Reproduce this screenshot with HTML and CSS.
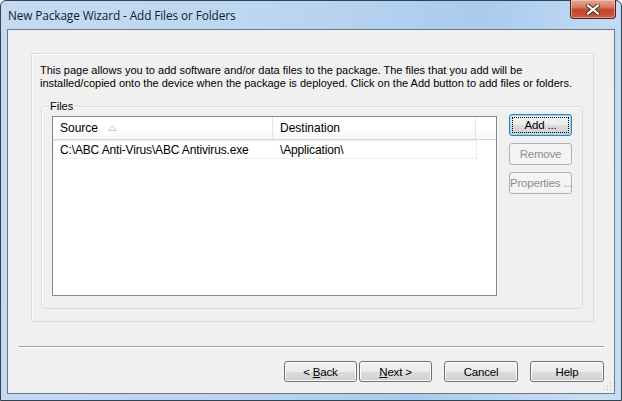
FILE: index.html
```html
<!DOCTYPE html>
<html>
<head>
<meta charset="utf-8">
<link rel="stylesheet" href="styles.css">
</head>
<body>
<div class="window">
  <div class="titlebar">
    <span class="title">New Package Wizard - Add Files or Folders</span>
    <div class="close-btn">
      <svg width="14" height="11" viewBox="0 0 14 11"><path d="M2 1.5 L12 9.5 M12 1.5 L2 9.5" stroke="#4a2a20" stroke-width="4" stroke-linecap="square"/><path d="M2 1.5 L12 9.5 M12 1.5 L2 9.5" stroke="#fff" stroke-width="2.2" stroke-linecap="square"/></svg>
    </div>
  </div>
  <div class="client">
    <div class="panel">
      <p class="intro">This page allows you to add software and/or data files to the package. The files that you add will be installed/copied onto the device when the package is deployed. Click on the Add button to add files or folders.</p>
      <fieldset class="files">
        <legend>Files</legend>
        <div class="files-body">
          <div class="listview">
            <div class="lv-header">
              <div class="col col-src">Source <svg class="sort" width="9" height="6" viewBox="0 0 9 6"><path d="M0.5 5.5 L4.5 0.5 L8.5 5.5 Z" fill="none" stroke="#c8ccd0"/></svg></div>
              <div class="col col-dst">Destination</div>
              <div class="col col-rest"></div>
            </div>
            <div class="lv-row">
              <div class="cell cell-src">C:\ABC Anti-Virus\ABC Antivirus.exe</div>
              <div class="cell cell-dst">\Application\</div>
            </div>
          </div>
          <div class="side-buttons">
            <button class="btn btn-default">Add ...</button>
            <button class="btn" disabled>Remove</button>
            <button class="btn" disabled>Properties ...</button>
          </div>
        </div>
      </fieldset>
    </div>
    <div class="separator"></div>
    <div class="footer">
      <button class="btn btn-nav">&lt; <u>B</u>ack</button>
      <button class="btn btn-nav"><u>N</u>ext &gt;</button>
      <button class="btn btn-nav btn-wide">Cancel</button>
      <button class="btn btn-nav btn-wide">Help</button>
    </div>
    <div class="grip">
      <svg width="8" height="8" viewBox="0 0 8 8"><g fill="#b8bcc0"><rect x="6" y="0" width="1" height="1"/><rect x="3" y="3" width="1" height="1"/><rect x="6" y="3" width="1" height="1"/><rect x="0" y="6" width="1" height="1"/><rect x="3" y="6" width="1" height="1"/><rect x="6" y="6" width="1" height="1"/></g></svg>
    </div>
  </div>
</div>
</body>
</html>
```
FILE: styles.css
```css
* { box-sizing: border-box; }
html, body { margin: 0; padding: 0; background: #fff; }
body {
  font-family: "Liberation Sans", Arial, sans-serif;
  font-size: 11px;
  color: #000;
}
.window {
  width: 622px;
  height: 401px;
  border: 1px solid #35414e;
  border-radius: 6px 6px 0 0;
  background: linear-gradient(100deg, #c4dbf2 0%, #bcd6f1 40%, #aacbee 70%, #c7dff5 95%);
  padding: 0 6px 6px 6px;
  display: flex;
  flex-direction: column;
}
.titlebar {
  height: 28px;
  display: flex;
  align-items: flex-start;
  justify-content: space-between;
  position: relative;
}
.title {
  font-family: "Open Sans", "Noto Sans", sans-serif;
  font-size: 11.8px;
  color: #0c1d31;
  margin-top: 6px;
  margin-left: 1px;
  letter-spacing: -0.1px;
}
.close-btn {
  width: 46px;
  height: 19px;
  margin-right: -1px;
  margin-top: -1px;
  border: 1px solid #4c2220;
  border-top: none;
  border-radius: 0 0 4px 4px;
  background: linear-gradient(#e6a898 0%, #d67a62 40%, #c4452a 55%, #cc5a3a 100%);
  box-shadow: inset 0 0 0 1px rgba(255,220,210,0.5);
  display: flex;
  align-items: center;
  justify-content: center;
}
.client {
  flex: 1;
  background: #f0f0f0;
  border: 1px solid #6c7886;
  position: relative;
  display: flex;
  flex-direction: column;
}
.panel {
  margin: 23px 20px 0 23px;
  height: 269px;
  border: 1px solid #d6dde3;
  box-shadow: inset 1px 1px 0 #fbfbfb;
  border-radius: 2px;
  padding: 10px 10px 12px 8px;
  display: flex;
  flex-direction: column;
}
.intro {
  margin: 0;
  line-height: 12.5px;
  padding-top: 0;
}
.files {
  margin: 11px 0 0 1px;
  border: 1px solid #d6dde3;
  border-radius: 3px;
  box-shadow: inset 1px 1px 0 #fbfbfb;
  padding: 0 10px 11px 10px;
  flex: 1;
  min-height: 0;
  display: flex;
}
.files legend {
  padding: 0 1px;
  margin-left: -3px;
  line-height: 12px;
}
.files-body {
  flex: 1;
  display: flex;
  gap: 12px;
  margin-top: 4px;
}
.listview {
  width: 445px;
  height: 180px;
  background: #fff;
  border: 1px solid #828790;
}
.lv-header {
  display: flex;
  height: 23px;
  border-bottom: 1px solid #d5d5d5;
  background: linear-gradient(#ffffff, #ffffff 50%, #f7f8fa);
}
.col {
  display: flex;
  align-items: center;
  padding-left: 7px;
  font-size: 12px;
  color: #000;
  border-right: 1px solid #e3e6e9;
}
.col-src { width: 220px; }
.col-dst { width: 203px; }
.col-rest { flex: 1; border-right: none; }
.sort { margin-left: 10px; margin-top: -1px; }
.lv-row {
  display: flex;
  height: 19px;
  width: 424px;
  border: 1px solid #ededed;
}
.cell {
  display: flex;
  align-items: center;
  padding-left: 6px;
  padding-top: 1px;
  font-size: 12px;
  letter-spacing: -0.15px;
}
.cell-src { width: 219px; }
.cell-dst { flex: 1; padding-left: 7px; }
.side-buttons {
  display: flex;
  flex-direction: column;
  gap: 7px;
  margin-top: -2px;
}
.btn {
  font-family: "Liberation Sans", Arial, sans-serif;
  font-size: 11.5px;
  width: 63px;
  height: 22px;
  padding: 0;
  border: 1px solid #707070;
  border-radius: 3px;
  background: linear-gradient(#f2f2f2 0%, #ebebeb 50%, #dddddd 51%, #cfcfcf 100%);
  box-shadow: inset 0 0 0 1px #fcfcfc;
  color: #000;
  letter-spacing: -0.2px;
  white-space: nowrap;
}
.btn:disabled {
  background: #f4f4f4;
  border-color: #adb2b5;
  color: #8d8d8d;
  box-shadow: none;
}
.btn-default {
  border-color: #3c7fb1;
  box-shadow: inset 0 0 0 1px #8fd8f8;
  outline: 1px dotted #000;
  outline-offset: -4px;
}
.separator {
  margin: 24px 10px 0 11px;
  height: 2px;
  border-top: 1px solid #a0a0a0;
  border-bottom: 1px solid #fff;
}
.footer {
  display: flex;
  justify-content: flex-end;
  margin: 13px 10px 0 0;
  gap: 2px;
}
.btn-nav { width: 73px; height: 21px; }
.btn-wide { width: 74px; margin-left: 10px; }
.grip {
  position: absolute;
  right: 2px;
  bottom: 2px;
  line-height: 0;
}
```
